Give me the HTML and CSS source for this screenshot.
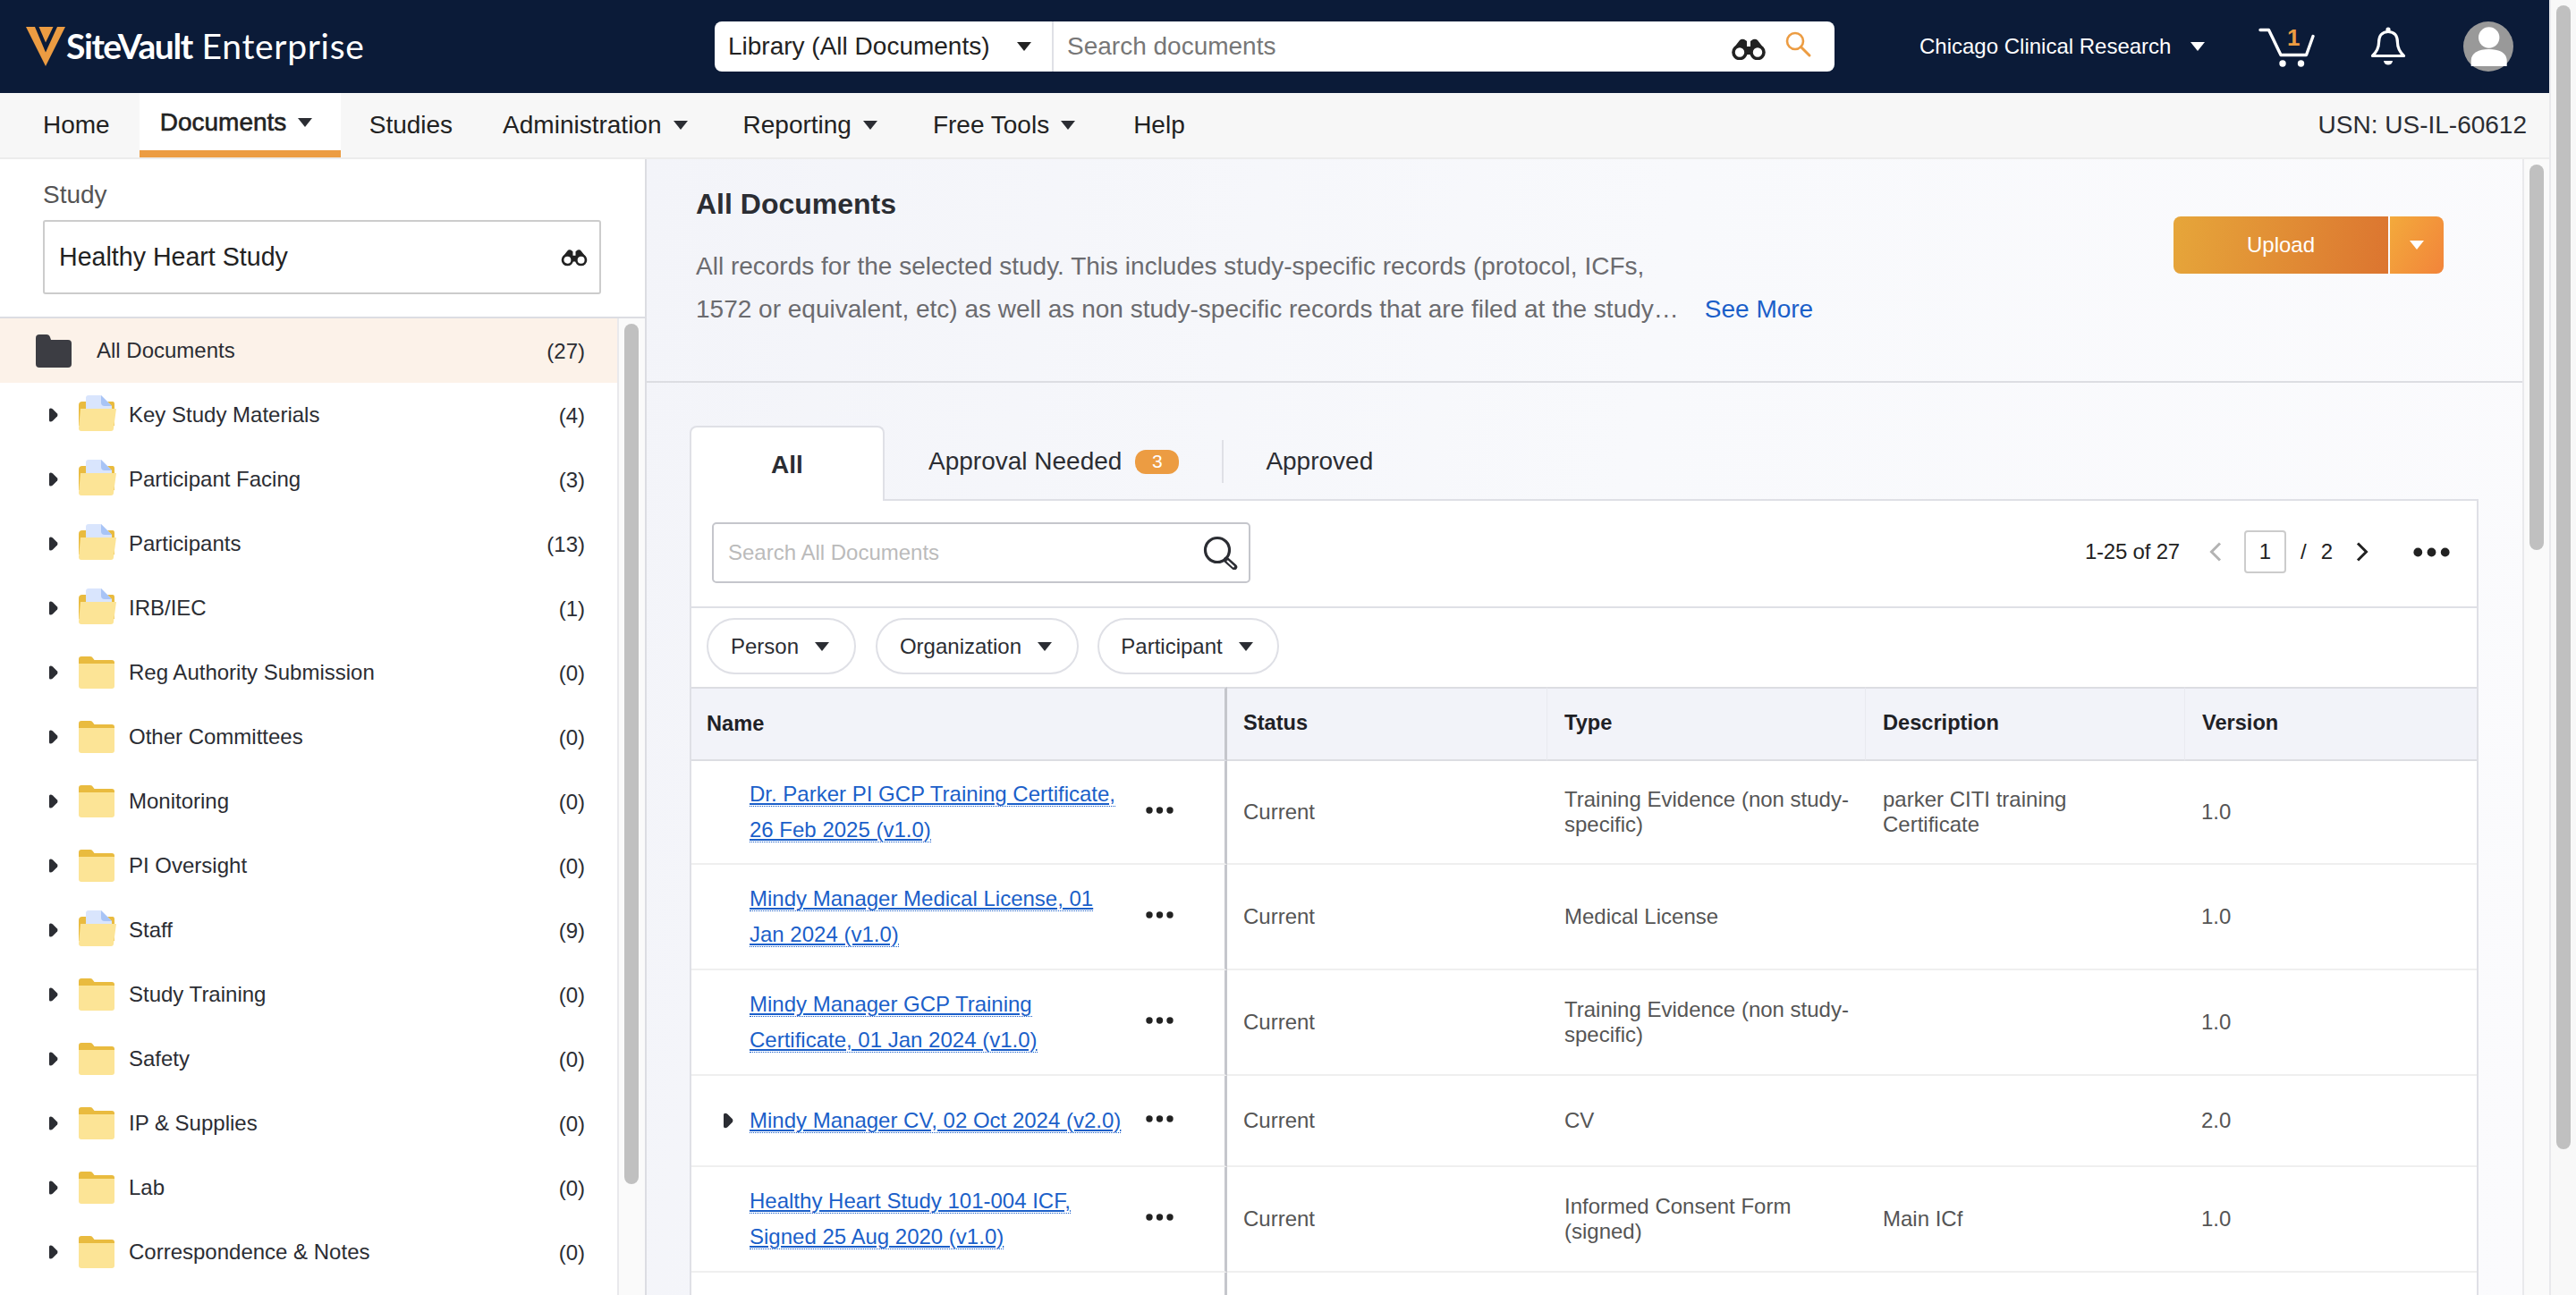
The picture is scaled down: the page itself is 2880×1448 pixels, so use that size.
FILE: index.html
```html
<!DOCTYPE html>
<html lang="en">
<head>
<meta charset="utf-8">
<title>SiteVault Enterprise</title>
<link rel="stylesheet" href="styles.css">
</head>
<body>
<svg class="defs" width="0" height="0" aria-hidden="true">
  <symbol id="tree-caret" viewBox="0 0 10 16"><path d="M1.5 0.5 Q0 0.5 0 2 V14 Q0 15.5 1.5 15.5 Q3 15.5 4 14.5 L9 9.5 Q10 8 9 6.5 L4 1.5 Q3 0.5 1.5 0.5Z" fill="#2b2d33"/></symbol>
  <symbol id="folder" viewBox="0 0 40 36"><path d="M0 10 V3 Q0 0 3 0 H13 Q15 0 16 2 L17.5 4 H37 Q40 4 40 7 V10Z" fill="#e9bb3f"/><path d="M0 8 H40 V33 Q40 36 37 36 H3 Q0 36 0 33Z" fill="#fce496"/></symbol>
  <symbol id="folder-doc" viewBox="0 0 42 40"><path d="M0 34 V11 Q0 7 4 7 H38 Q40 7 40 10 V34Z" fill="#e9bb3f"/><path d="M8 3 Q8 0 11 0 H25 L37 12 V28 H8Z" fill="#d9e5fd"/><path d="M25 0 L37 12 H29 Q25 12 25 8Z" fill="#a8c4f6"/><path d="M2 15 H42 L39 37 Q39 40 36 40 H3 Q0 40 0 37 Z" fill="#fce496"/></symbol>
  <symbol id="binoculars" viewBox="0 0 42 24"><path d="M4 11 L11 2 Q13 0 16 1 L19 3 V9 H23 V3 L26 1 Q29 0 31 2 L38 11 V18 H4Z" fill="#222"/><circle cx="11" cy="15.5" r="7" fill="#fff" stroke="#222" stroke-width="3.6"/><circle cx="31" cy="15.5" r="7" fill="#fff" stroke="#222" stroke-width="3.6"/></symbol>
  <symbol id="dots" viewBox="0 0 31 8"><circle cx="4" cy="4" r="3.7" fill="#222"/><circle cx="15.5" cy="4" r="3.7" fill="#222"/><circle cx="27" cy="4" r="3.7" fill="#222"/></symbol>
</svg>
<div class="app">
  <div class="page">
    <header class="topbar">
      <div class="brand">
        <svg class="logo" viewBox="0 0 44 44"><path d="M0 0 H44 L22 44Z" fill="#ec9c42"/><path d="M10 0 H35 L22 28.5Z" fill="#0b1b38"/><path d="M14.5 0 H30.5 L22 17.5Z" fill="#ec9c42"/></svg>
        <span class="brand-name"><b>SiteVault</b> Enterprise</span>
      </div>
      <div class="searchbar">
        <div class="scope"><span>Library (All Documents)</span><i class="caret caret-dark"></i></div>
        <div class="searchfield">
          <span class="search-ph">Search documents</span>
          <svg class="bino-top"><use href="#binoculars"/></svg>
          <svg class="mag-orange" viewBox="0 0 30 30"><circle cx="11" cy="11" r="9" fill="none" stroke="#ec9c42" stroke-width="2.6"/><path d="M17.5 17.5 L27 27" stroke="#ec9c42" stroke-width="3" stroke-linecap="round"/></svg>
        </div>
      </div>
      <div class="org"><span>Chicago Clinical Research</span><i class="caret caret-white"></i></div>
      <div class="cart">
        <svg viewBox="0 0 65 48"><path d="M2 4.5 H11.5 L25 32.5 H53.5 L61 11.5" fill="none" stroke="#fff" stroke-width="3.4" stroke-linecap="round" stroke-linejoin="round"/><circle cx="27" cy="42" r="3.7" fill="#fff"/><circle cx="47.5" cy="42" r="3.7" fill="#fff"/></svg>
        <span class="cart-count">1</span>
      </div>
      <svg class="bell" viewBox="0 0 40 46"><circle cx="20" cy="4" r="2.6" fill="#fff"/><path d="M2.5 33.5 C7 29 9.5 25 9.5 19 C9.5 11 13 6.5 20 6.5 C27 6.5 30.5 11 30.5 19 C30.5 25 33 29 37.5 33.5 Z" fill="none" stroke="#fff" stroke-width="3.2" stroke-linejoin="round"/><path d="M15 39 H25 C24.5 45 15.5 45 15 39Z" fill="#fff"/></svg>
      <svg class="avatar" viewBox="0 0 56 56"><circle cx="28" cy="28" r="28" fill="#999"/><circle cx="28.7" cy="18" r="11.7" fill="#fff"/><path d="M8.7 50 V44 C8.7 35 17 31 28.7 31 C40 31 48.7 35 48.7 44 V50Z" fill="#fff"/></svg>
    </header>

    <nav class="navbar">
      <a class="nav-item nav-home">Home</a>
      <a class="nav-item nav-active">Documents<i class="caret caret-nav"></i></a>
      <a class="nav-item nav-studies">Studies</a>
      <a class="nav-item">Administration<i class="caret caret-nav"></i></a>
      <a class="nav-item">Reporting<i class="caret caret-nav"></i></a>
      <a class="nav-item">Free Tools<i class="caret caret-nav"></i></a>
      <a class="nav-item nav-help">Help</a>
      <span class="usn">USN: US-IL-60612</span>
    </nav>

    <div class="content">
      <aside class="sidebar">
        <div class="study">
          <div class="study-label">Study</div>
          <div class="study-input"><span>Healthy Heart Study</span><svg class="bino-small"><use href="#binoculars"/></svg></div>
        </div>
        <div class="tree-wrap">
          <ul class="tree">
            <li class="tree-row tree-active">
              <svg class="folder-dark" viewBox="0 0 40 37"><path d="M0 4 Q0 0 4 0 H12 Q15 0 16 3 L17 6 H36 Q40 6 40 10 V33 Q40 37 36 37 H4 Q0 37 0 33Z" fill="#3c3d43"/></svg>
              <span class="tree-label">All Documents</span><span class="tree-count">(27)</span>
            </li>
            <li class="tree-row"><svg class="tc"><use href="#tree-caret"/></svg><svg class="fd"><use href="#folder-doc"/></svg><span class="tree-label">Key Study Materials</span><span class="tree-count">(4)</span></li>
            <li class="tree-row"><svg class="tc"><use href="#tree-caret"/></svg><svg class="fd"><use href="#folder-doc"/></svg><span class="tree-label">Participant Facing</span><span class="tree-count">(3)</span></li>
            <li class="tree-row"><svg class="tc"><use href="#tree-caret"/></svg><svg class="fd"><use href="#folder-doc"/></svg><span class="tree-label">Participants</span><span class="tree-count">(13)</span></li>
            <li class="tree-row"><svg class="tc"><use href="#tree-caret"/></svg><svg class="fd"><use href="#folder-doc"/></svg><span class="tree-label">IRB/IEC</span><span class="tree-count">(1)</span></li>
            <li class="tree-row"><svg class="tc"><use href="#tree-caret"/></svg><svg class="fp"><use href="#folder"/></svg><span class="tree-label">Reg Authority Submission</span><span class="tree-count">(0)</span></li>
            <li class="tree-row"><svg class="tc"><use href="#tree-caret"/></svg><svg class="fp"><use href="#folder"/></svg><span class="tree-label">Other Committees</span><span class="tree-count">(0)</span></li>
            <li class="tree-row"><svg class="tc"><use href="#tree-caret"/></svg><svg class="fp"><use href="#folder"/></svg><span class="tree-label">Monitoring</span><span class="tree-count">(0)</span></li>
            <li class="tree-row"><svg class="tc"><use href="#tree-caret"/></svg><svg class="fp"><use href="#folder"/></svg><span class="tree-label">PI Oversight</span><span class="tree-count">(0)</span></li>
            <li class="tree-row"><svg class="tc"><use href="#tree-caret"/></svg><svg class="fd"><use href="#folder-doc"/></svg><span class="tree-label">Staff</span><span class="tree-count">(9)</span></li>
            <li class="tree-row"><svg class="tc"><use href="#tree-caret"/></svg><svg class="fp"><use href="#folder"/></svg><span class="tree-label">Study Training</span><span class="tree-count">(0)</span></li>
            <li class="tree-row"><svg class="tc"><use href="#tree-caret"/></svg><svg class="fp"><use href="#folder"/></svg><span class="tree-label">Safety</span><span class="tree-count">(0)</span></li>
            <li class="tree-row"><svg class="tc"><use href="#tree-caret"/></svg><svg class="fp"><use href="#folder"/></svg><span class="tree-label">IP &amp; Supplies</span><span class="tree-count">(0)</span></li>
            <li class="tree-row"><svg class="tc"><use href="#tree-caret"/></svg><svg class="fp"><use href="#folder"/></svg><span class="tree-label">Lab</span><span class="tree-count">(0)</span></li>
            <li class="tree-row"><svg class="tc"><use href="#tree-caret"/></svg><svg class="fp"><use href="#folder"/></svg><span class="tree-label">Correspondence &amp; Notes</span><span class="tree-count">(0)</span></li>
          </ul>
          <div class="scroll"><div class="thumb thumb-tree"></div></div>
        </div>
      </aside>

      <main class="main">
        <section class="intro">
          <div class="intro-text">
            <h1>All Documents</h1>
            <p>All records for the selected study. This includes study-specific records (protocol, ICFs,</p>
            <p>1572 or equivalent, etc) as well as non study-specific records that are filed at the study…<a class="see-more">See More</a></p>
          </div>
          <div class="upload"><span class="upload-main">Upload</span><span class="upload-drop"><i class="caret caret-white"></i></span></div>
        </section>

        <section class="docs">
          <div class="tabs">
            <span class="tab tab-on">All</span>
            <span class="tab tab-needed">Approval Needed<span class="badge">3</span></span>
            <span class="tab tab-approved">Approved</span>
          </div>
          <div class="panel">
            <div class="toolbar">
              <div class="panel-search">
                <span>Search All Documents</span>
                <svg viewBox="0 0 40 38"><circle cx="16" cy="16" r="13.5" fill="none" stroke="#2b2d33" stroke-width="3.2"/><path d="M26 27 L35 35" stroke="#2b2d33" stroke-width="6.5" stroke-linecap="round"/><path d="M27.5 28.5 L34 34.5" stroke="#fff" stroke-width="2" stroke-linecap="round"/></svg>
              </div>
              <div class="pager">
                <span class="pager-range">1-25 of 27</span>
                <svg class="chev chev-prev" viewBox="0 0 16 22"><path d="M13 1.5 L3.5 11 L13 20.5" fill="none" stroke="#b3b3b3" stroke-width="3"/></svg>
                <span class="page-box">1</span>
                <span class="pager-slash">/</span>
                <span class="pager-total">2</span>
                <svg class="chev chev-next" viewBox="0 0 16 22"><path d="M3 1.5 L12.5 11 L3 20.5" fill="none" stroke="#222" stroke-width="3"/></svg>
                <svg class="pager-dots"><use href="#dots"/></svg>
              </div>
            </div>
            <div class="filters">
              <span class="pill pill-person">Person<i class="caret caret-pill"></i></span>
              <span class="pill pill-org">Organization<i class="caret caret-pill"></i></span>
              <span class="pill pill-part">Participant<i class="caret caret-pill"></i></span>
            </div>
            <table class="grid">
              <colgroup><col class="c-name"><col class="c-status"><col class="c-type"><col class="c-desc"><col class="c-ver"></colgroup>
              <thead>
                <tr><th class="name-cell">Name</th><th>Status</th><th>Type</th><th>Description</th><th>Version</th></tr>
              </thead>
              <tbody>
                <tr class="r-first">
                  <td class="name-cell"><div class="name-wrap"><span class="expander"></span><span class="doc"><a>Dr. Parker PI GCP Training Certificate, 26 Feb 2025 (v1.0)</a></span><svg class="row-dots"><use href="#dots"/></svg></div></td>
                  <td>Current</td><td>Training Evidence (non study-specific)</td><td>parker CITI training Certificate</td><td>1.0</td>
                </tr>
                <tr>
                  <td class="name-cell"><div class="name-wrap"><span class="expander"></span><span class="doc"><a>Mindy Manager Medical License, 01 Jan 2024 (v1.0)</a></span><svg class="row-dots"><use href="#dots"/></svg></div></td>
                  <td>Current</td><td>Medical License</td><td></td><td>1.0</td>
                </tr>
                <tr>
                  <td class="name-cell"><div class="name-wrap"><span class="expander"></span><span class="doc"><a>Mindy Manager GCP Training Certificate, 01 Jan 2024 (v1.0)</a></span><svg class="row-dots"><use href="#dots"/></svg></div></td>
                  <td>Current</td><td>Training Evidence (non study-specific)</td><td></td><td>1.0</td>
                </tr>
                <tr class="r-short">
                  <td class="name-cell"><div class="name-wrap"><span class="expander"><svg class="tc-row"><use href="#tree-caret"/></svg></span><span class="doc"><a>Mindy Manager CV, 02 Oct 2024 (v2.0)</a></span><svg class="row-dots"><use href="#dots"/></svg></div></td>
                  <td>Current</td><td>CV</td><td></td><td>2.0</td>
                </tr>
                <tr>
                  <td class="name-cell"><div class="name-wrap"><span class="expander"></span><span class="doc"><a>Healthy Heart Study 101-004 ICF, Signed 25 Aug 2020 (v1.0)</a></span><svg class="row-dots"><use href="#dots"/></svg></div></td>
                  <td>Current</td><td>Informed Consent Form (signed)</td><td>Main ICf</td><td>1.0</td>
                </tr>
                <tr class="r-cut"><td class="name-cell"></td><td></td><td></td><td></td><td></td></tr>
              </tbody>
            </table>
          </div>
        </section>
      </main>
      <div class="scroll"><div class="thumb thumb-main"></div></div>
    </div>
  </div>
  <div class="scroll scroll-page"><div class="thumb thumb-page"></div></div>
</div>
</body>
</html>
```

FILE: styles.css
```css
* { box-sizing: border-box; }
html, body { margin: 0; height: 100%; overflow: hidden; }
body { font-family: "Liberation Sans", Arial, sans-serif; color: #2b2d33; font-size: 24px; background: #fff; }
.defs { position: absolute; }
i { display: inline-block; font-style: normal; }

.app { display: flex; width: 2880px; height: 1448px; }
.page { flex: 1; min-width: 0; display: flex; flex-direction: column; }

.scroll { flex: none; width: 30px; background: #fafafa; border-left: 2px solid #e9e9ec; padding: 6px 0 0 6px; }
.thumb { width: 16px; background: #c0c0c0; border-radius: 8px; }
.thumb-tree { height: 962px; }
.thumb-main { height: 431px; }
.thumb-page { height: 1279px; }
.scroll-page { background: #f8f8f8; }

.caret { width: 0; height: 0; border-style: solid; border-color: transparent; border-width: 10px 8px 0; }
.caret-dark { border-top-color: #222; }
.caret-white { border-top-color: #fff; }
.caret-nav { border-top-color: #2b2d33; border-width: 10px 8.5px 0; margin-left: 13px; }
.caret-pill { border-top-color: #2b2d33; border-width: 10px 8px 0; margin-left: 18px; }

/* top bar */
.topbar { height: 104px; background: #0b1b38; display: flex; align-items: center; flex: none; }
.brand { display: flex; align-items: center; width: 799px; padding-left: 29px; color: #fff; }
.logo { width: 44px; height: 44px; flex: none; }
.brand-name { font-size: 39px; letter-spacing: 0.7px; margin-left: 1px; position: relative; top: -1px; white-space: nowrap; font-family: "Lato", "Liberation Sans", sans-serif; }
.brand-name b { font-weight: 700; letter-spacing: -1.4px; }
.searchbar { display: flex; width: 1252px; height: 56px; background: #fff; border-radius: 8px; flex: none; }
.scope { width: 379px; flex: none; display: flex; align-items: center; justify-content: space-between; padding: 0 23px 0 15px; font-size: 28px; border-right: 2px solid #dfe0e6; color: #222; white-space: nowrap; }
.searchfield { flex: 1; display: flex; align-items: center; padding-left: 15px; }
.search-ph { font-size: 28px; color: #777; flex: 1; }
.bino-top { width: 42px; height: 24px; margin-top: 6px; }
.mag-orange { width: 30px; height: 30px; margin: -5px 25px 0 20px; }
.org { display: flex; align-items: center; margin-left: 95px; width: 319px; color: #fff; font-size: 24px; white-space: nowrap; flex: none; }
.org .caret { margin-left: 22px; }
.cart { position: relative; width: 65px; height: 48px; margin-left: 60px; flex: none; top: 1px; }
.cart svg { display: block; width: 65px; height: 48px; }
.cart-count { position: absolute; left: 32px; top: -2px; color: #ec9c42; font-weight: 700; font-size: 26px; }
.bell { width: 40px; height: 46px; margin-left: 60px; flex: none; }
.avatar { width: 56px; height: 56px; margin-left: 64px; flex: none; }

/* nav */
.navbar { height: 74px; background: #f7f7f7; border-bottom: 2px solid #ececec; display: flex; align-items: stretch; font-size: 28px; flex: none; white-space: nowrap; }
.nav-item { display: flex; align-items: center; padding: 0 31px 1px; color: #222; }
.nav-home { padding-left: 48px; padding-right: 33px; }
.nav-studies { padding-left: 32px; padding-right: 25px; }
.nav-help { padding-left: 34px; }
.nav-active { background: #fff; width: 225px; padding: 2px 0 0 23px; border-bottom: 8px solid #ec9c42; -webkit-text-stroke: 0.6px #222; }
.usn { margin-left: auto; align-self: center; padding: 0 25px 1px 0; }

/* layout */
.content { flex: 1; min-height: 0; display: flex; overflow: hidden; }

/* sidebar */
.sidebar { width: 723px; flex: none; border-right: 2px solid #dcdde2; display: flex; flex-direction: column; }
.study { height: 178px; padding: 24px 0 0 48px; border-bottom: 2px solid #dcdde2; flex: none; }
.study-label { color: #555; font-size: 28px; line-height: 32px; margin-bottom: 12px; }
.study-input { width: 624px; height: 83px; border: 2px solid #ccc; border-radius: 3px; display: flex; align-items: center; justify-content: space-between; padding: 0 12px 0 16px; font-size: 28.6px; color: #222; }
.bino-small { width: 32px; height: 20px; }
.tree-wrap { flex: 1; min-height: 0; display: flex; }
.tree-wrap .scroll { width: 31px; }
.tree { list-style: none; margin: 0; padding: 0; flex: none; width: 690px; }
.tree-row { height: 72px; display: flex; align-items: center; padding-right: 36px; font-size: 24px; white-space: nowrap; }
.tree-active { background: #fcf2e9; padding-left: 40px; }
.folder-dark { width: 40px; height: 37px; margin-right: 28px; flex: none; }
.tc { width: 10px; height: 16px; margin-left: 55px; flex: none; }
.fd { width: 42px; height: 40px; margin-left: 23px; margin-right: 14px; margin-top: -4px; flex: none; }
.fp { width: 40px; height: 36px; margin-left: 23px; margin-right: 16px; margin-top: -1px; flex: none; }
.tree-label { flex: 1; }
.tree-count { position: relative; top: 1px; }

/* main */
.main { flex: 1; min-width: 0; background: linear-gradient(100deg, #f3f4f9 0%, #f8f9fc 50%, #fbfbfd 100%); }
.intro { height: 250px; border-bottom: 2px solid #dcdde2; display: flex; justify-content: space-between; padding-left: 55px; }
h1 { margin: 30px 0 26px; font-size: 32px; line-height: 40px; font-weight: 700; }
.intro p { margin: 0; font-size: 28px; line-height: 48px; color: #6b6b6f; white-space: nowrap; }
.see-more { color: #1b5fc9; margin-left: 29px; }
.upload { display: flex; width: 302px; height: 64px; margin: 64px 88px 0 0; border-radius: 8px; overflow: hidden; color: #fff; font-size: 24px; flex: none; }
.upload-main { width: 240px; display: flex; align-items: center; justify-content: center; background: linear-gradient(100deg, #e6a63a, #dc7530); }
.upload-drop { flex: 1; margin-left: 2px; display: flex; align-items: center; justify-content: center; background: linear-gradient(120deg, #f3aa3c, #f2843a); }
.docs { padding: 48px 49px 0 48px; }
.tabs { height: 82px; display: flex; align-items: center; font-size: 28px; }
.tab { white-space: nowrap; }
.tab-on { width: 218px; height: 84px; margin-bottom: -2px; position: relative; z-index: 1; background: #fff; border: 2px solid #dfe0e6; border-bottom: 0; border-radius: 8px 8px 0 0; font-weight: 700; display: flex; align-items: center; justify-content: center; padding-top: 2px; }
.tab-needed { margin-left: 49px; display: flex; align-items: center; padding-right: 48px; height: 48px; border-right: 2px solid #dfe0e6; margin-top: -2px; }
.badge { margin-left: 15px; width: 49px; height: 27px; background: #ec9c42; color: #fff; border-radius: 12px; font-size: 21px; display: flex; align-items: center; justify-content: center; }
.tab-approved { margin-left: 47px; margin-top: -2px; }
.panel { height: 900px; background: #fff; border: 2px solid #dfe0e6; border-bottom: 0; }
.toolbar { height: 120px; padding: 24px 30px 0 23px; border-bottom: 2px solid #dfe0e6; display: flex; justify-content: space-between; }
.panel-search { width: 602px; height: 68px; border: 2px solid #c5c6cc; border-radius: 5px; display: flex; align-items: center; justify-content: space-between; padding: 0 11px 0 16px; color: #bbb; }
.panel-search svg { width: 40px; height: 38px; }
.pager { display: flex; align-items: center; height: 68px; color: #222; margin-top: -1px; }
.pager-range { font-size: 24px; letter-spacing: -0.2px; }
.chev { width: 16px; height: 22px; }
.chev-prev { margin: 0 24px 0 32px; }
.page-box { width: 47px; height: 48px; border: 2px solid #ccc; border-radius: 4px; display: flex; align-items: center; justify-content: center; }
.pager-slash { margin-left: 16px; }
.pager-total { margin-left: 16px; }
.chev-next { margin-left: 25px; }
.pager-dots { width: 41px; height: 11px; margin-left: 49px; }
.filters { height: 88px; padding: 11px 0 0 17px; display: flex; }
.pill { height: 63px; border: 2px solid #dfe0e6; border-radius: 32px; display: flex; align-items: center; justify-content: center; padding-right: 3px; }
.pill-person { width: 167px; margin-right: 22px; }
.pill-org { width: 227px; margin-right: 21px; }
.pill-part { width: 203px; }

.grid { width: 100%; border-collapse: separate; border-spacing: 0; table-layout: fixed; }
.c-name { width: 599px; }
.c-status { width: 358px; }
.c-type { width: 356px; }
.c-desc { width: 357px; }
.grid th { height: 83px; background: #f2f3f9; border-top: 2px solid #dcdde2; border-bottom: 2px solid #dcdde2; border-right: 1px solid #e9eaf0; text-align: left; font-size: 23.6px; padding: 0 0 2px 19px; color: #1f2126; }
.grid th:first-child { padding-left: 17px; }
.grid th:nth-child(2) { padding-left: 18px; }
.grid th:last-child { border-right: 0; }
.grid td { height: 118px; border-bottom: 2px solid #efefef; padding: 0 12px 0 19px; line-height: 28px; color: #555; vertical-align: middle; }
.grid td:nth-child(2), .grid td:nth-child(5) { padding-left: 18px; }
.grid td:nth-child(4) { padding-right: 40px; }
.grid .r-first td { height: 116px; }
.grid .r-short td { height: 102px; }
.grid .name-cell { border-right: 3px solid #c5c6cc; padding: 0; }
.name-wrap { display: flex; align-items: center; padding-left: 36px; }
.expander { width: 29px; flex: none; display: flex; }
.tc-row { width: 11px; height: 18px; }
.doc { width: 425px; flex: none; line-height: 40px; }
.doc a { color: #1b5fc9; text-decoration: underline; border-bottom: 1.5px dotted #1b5fc9; }
.row-dots { width: 31px; height: 8px; margin: -4px 0 0 18px; flex: none; }
```
